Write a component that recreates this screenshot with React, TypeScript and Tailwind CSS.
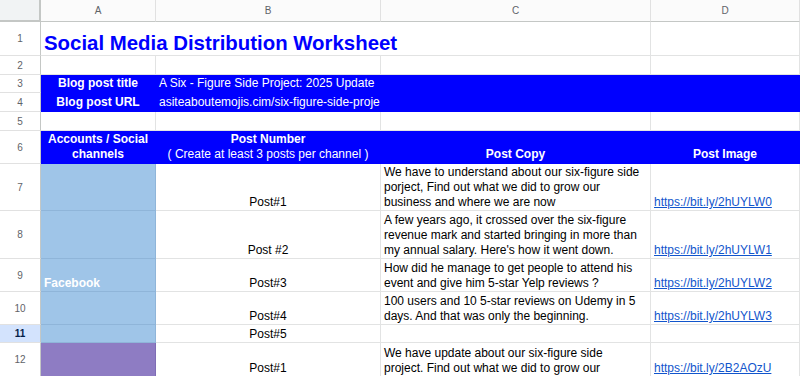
import React from 'react';

interface CellProps {
  className?: string;
  children?: React.ReactNode;
}

const Cell = ({ className = '', children }: CellProps) => (
  <div
    className={`overflow-hidden whitespace-nowrap border-b border-r px-[3px] text-[12px] leading-[15px] ${className}`}
  >
    {children}
  </div>
);

const RowNum = ({ n, active = false }: { n: number; active?: boolean }) => (
  <div
    className={`flex items-center justify-center border-b border-r border-b-[#e1e1e1] border-r-[#c4c7c5] text-[10px] ${
      active ? 'bg-[#d3e3fd] font-bold text-[#041e49]' : 'bg-white text-[#5f6368]'
    }`}
  >
    {n}
  </div>
);

const ColHead = ({ label }: { label: string }) => (
  <div className="flex items-center justify-center border-b border-r border-b-[#c4c7c5] border-r-[#e1e1e1] bg-[#fbfbfb] text-[10px] text-[#5f6368]">
    {label}
  </div>
);

const grid = 'border-[#e2e3e3] bg-white text-black';
const blue = 'border-[#0000ff] bg-[#0000ff] text-white';
const fb = 'border-b-[#8fb5d9] border-r-[#8fb5d9] bg-[#9fc5e8] text-white';
const purple = 'border-b-[#7f6db5] border-r-[#7f6db5] bg-[#8e7cc3] text-white';

const posts = [
  {
    n: 7,
    post: 'Post#1',
    copy: [
      'We have to understand about our six-figure side',
      'porject, Find out what we did to grow our',
      'business and where we are now',
    ],
    link: 'https://bit.ly/2hUYLW0',
  },
  {
    n: 8,
    post: 'Post #2',
    copy: [
      'A few years ago, it crossed over the six-figure',
      'revenue mark and started bringing in more than',
      "my annual salary. Here's how it went down.",
    ],
    link: 'https://bit.ly/2hUYLW1',
  },
  {
    n: 9,
    post: 'Post#3',
    copy: [
      'How did he manage to get people to attend his',
      'event and give him 5-star Yelp reviews ?',
    ],
    link: 'https://bit.ly/2hUYLW2',
    label: 'Facebook',
  },
  {
    n: 10,
    post: 'Post#4',
    copy: [
      '100 users and 10 5-star reviews on Udemy in 5',
      'days. And that was only the beginning.',
    ],
    link: 'https://bit.ly/2hUYLW3',
  },
  { n: 11, post: 'Post#5', copy: [], link: '' },
];

export default function App() {
  return (
    <div className="h-[376px] w-[800px] overflow-hidden bg-white font-['Liberation_Sans',Arial,sans-serif]">
      <div className="grid grid-cols-[41px_115px_225px_270px_149px] grid-rows-[22px_34px_19px_18px_19px_19px_33px_47px_48px_33px_33px_18px_34px]">
        {/* column headers */}
        <div className="border-b-2 border-r-2 border-[#c4c7c5] bg-[#f1f3f4]" />
        <ColHead label="A" />
        <ColHead label="B" />
        <ColHead label="C" />
        <ColHead label="D" />

        {/* 1 */}
        <RowNum n={1} />
        <Cell className={`${grid} col-span-3 flex items-end`}>
          <span className="text-[20.4px] font-bold leading-[24px] text-[#0000ff]">
            Social Media Distribution Worksheet
          </span>
        </Cell>
        <Cell className={grid} />

        {/* 2 */}
        <RowNum n={2} />
        <Cell className={grid} />
        <Cell className={grid} />
        <Cell className={grid} />
        <Cell className={grid} />

        {/* 3 */}
        <RowNum n={3} />
        <Cell className={`${blue} flex items-end justify-center pb-[1px] font-bold`}>Blog post title</Cell>
        <Cell className={`${blue} flex items-end pb-[1px]`}>A Six - Figure Side Project: 2025 Update</Cell>
        <Cell className={blue} />
        <Cell className={blue} />

        {/* 4 */}
        <RowNum n={4} />
        <Cell className={`${blue} flex items-end justify-center pb-[1px] font-bold`}>Blog post URL</Cell>
        <Cell className={`${blue} flex items-end pb-[1px]`}>asiteaboutemojis.cim/six-figure-side-project-2025-update</Cell>
        <Cell className={blue} />
        <Cell className={blue} />

        {/* 5 */}
        <RowNum n={5} />
        <Cell className={grid} />
        <Cell className={grid} />
        <Cell className={grid} />
        <Cell className={grid} />

        {/* 6 */}
        <RowNum n={6} />
        <Cell className={`${blue} flex flex-col items-center justify-end pb-[1px] text-center font-bold`}>
          <span>Accounts / Social</span>
          <span>channels</span>
        </Cell>
        <Cell className={`${blue} flex flex-col items-center justify-end pb-[1px] text-center`}>
          <span className="font-bold">Post Number</span>
          <span>( Create at least 3 posts per channel )</span>
        </Cell>
        <Cell className={`${blue} flex items-end justify-center pb-[1px] font-bold`}>Post Copy</Cell>
        <Cell className={`${blue} flex items-end justify-center pb-[1px] font-bold`}>Post Image</Cell>

        {/* 7 - 11 */}
        {posts.map((p) => (
          <React.Fragment key={p.n}>
            <RowNum n={p.n} active={p.n === 11} />
            <Cell className={`${fb} flex items-end font-bold`}>{p.label}</Cell>
            <Cell className={`${grid} flex items-end justify-center`}>{p.post}</Cell>
            <Cell className={`${grid} flex flex-col justify-end`}>
              {p.copy.map((line) => (
                <span key={line}>{line}</span>
              ))}
            </Cell>
            <Cell className={`${grid} flex items-end`}>
              {p.link && <span className="text-[#1155cc] underline">{p.link}</span>}
            </Cell>
          </React.Fragment>
        ))}

        {/* 12 */}
        <RowNum n={12} />
        <Cell className={purple} />
        <Cell className={`${grid} flex items-end justify-center`}>Post#1</Cell>
        <Cell className={`${grid} flex flex-col justify-end`}>
          <span>We have update about our six-figure side</span>
          <span>project. Find out what we did to grow our</span>
        </Cell>
        <Cell className={`${grid} flex items-end`}>
          <span className="text-[#1155cc] underline">https://bit.ly/2B2AOzU</span>
        </Cell>
      </div>
    </div>
  );
}
